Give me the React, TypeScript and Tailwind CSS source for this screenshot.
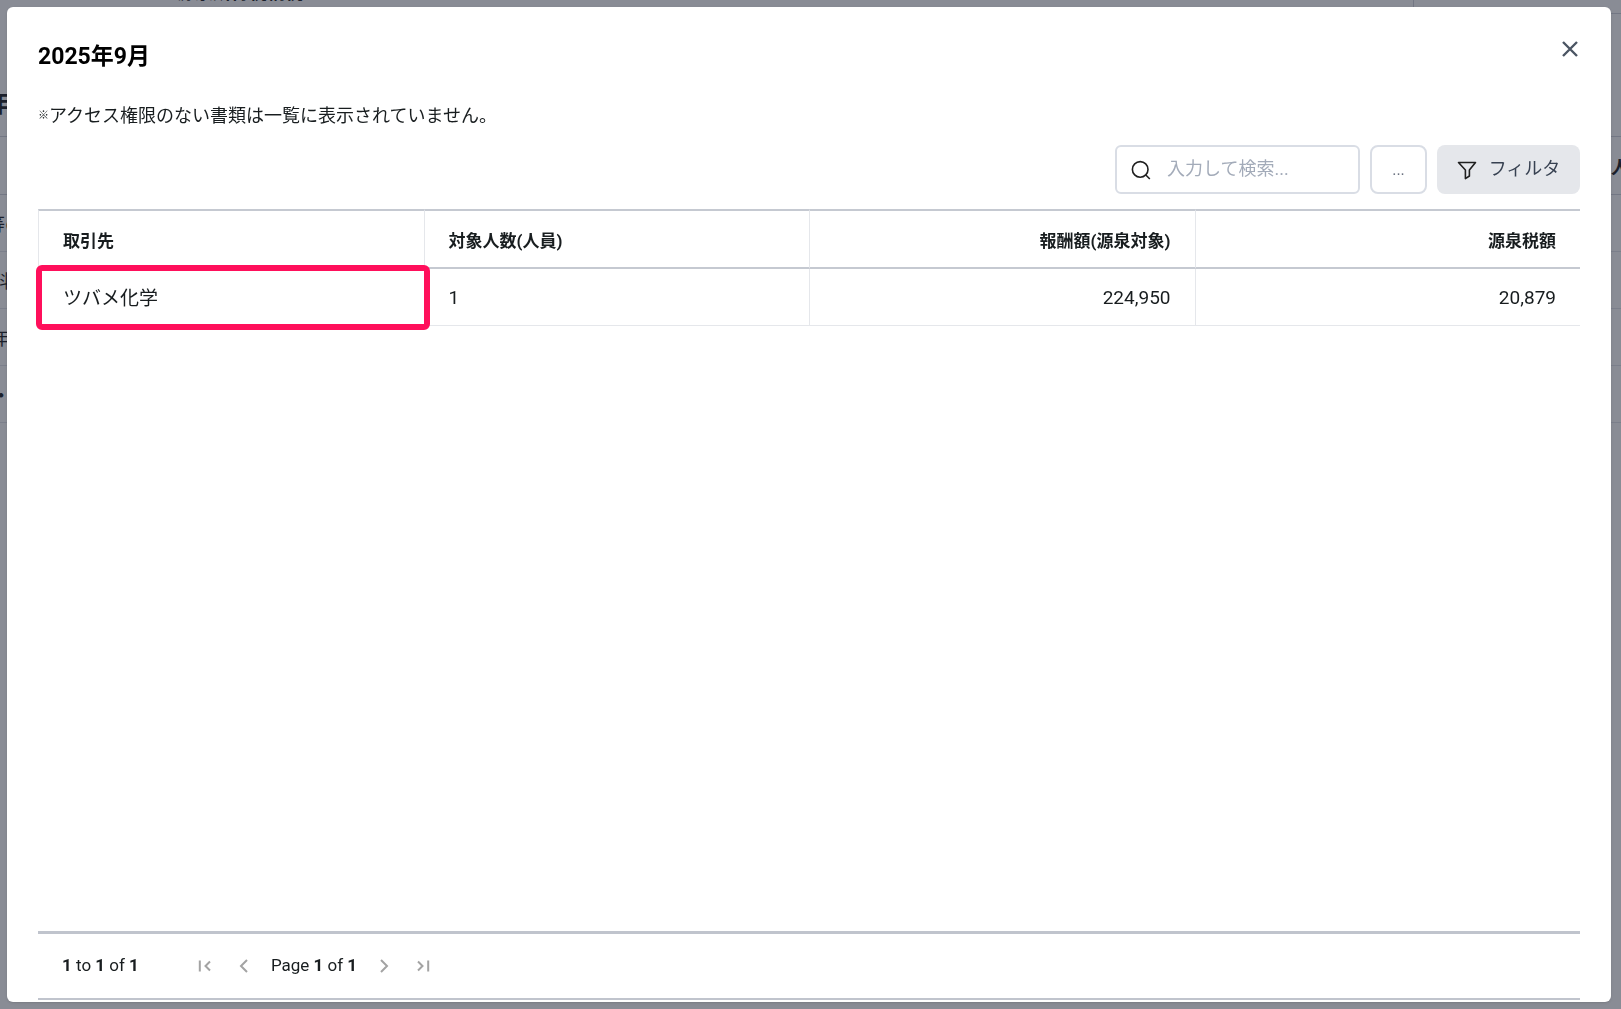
import { useState } from "react";

type Row = {
  partner: string;
  people: number;
  amount: number;
  tax: number;
};

const rows: Row[] = [{ partner: "ツバメ化学", people: 1, amount: 224950, tax: 20879 }];

const cell = "border-l border-[#e5e7eb] px-6";
const head = "border-l border-y-2 border-l-[#e5e7eb] border-y-[#c5c9d1] px-6 pt-[5px]";
const pager = "flex h-6 w-6 items-center justify-center text-[#a3a3a3]";
const behindRow = "flex h-[57px] shrink-0 items-center border-b border-[#7b7f8b] pt-1 text-lg whitespace-nowrap";

function Chevron({ flip, bar }: { flip?: boolean; bar?: boolean }) {
  return (
    <svg
      className={flip ? "h-4 w-4 rotate-180" : "h-4 w-4"}
      viewBox="0 0 16 16"
      fill="none"
      stroke="currentColor"
      strokeWidth="2"
    >
      {bar ? (
        <>
          <path d="M2.8 2.5v11" />
          <path d="M13 3.5 8.5 8l4.5 4.5" />
        </>
      ) : (
        <path d="M11 2 5 8l6 6" />
      )}
    </svg>
  );
}

// dimmed list page, only its edges show around the dialog
function PageBehind() {
  return (
    <div className="flex h-screen flex-col overflow-hidden bg-[#898c95] text-[#1b1f2b]">
      <div className="flex h-[14px] shrink-0 justify-between overflow-hidden">
        <span className="-mt-[19px] ml-[177px] h-6 text-lg leading-6 font-bold">源泉所得税納税</span>
        <div className="h-full w-[208px] border-b border-l border-[#737784]" />
      </div>
      <div className="flex h-[123px] shrink-0 items-end border-b border-[#737784] pb-4">
        <span className="flex w-[11px] justify-end text-2xl font-bold">年</span>
      </div>
      <div className="flex h-[58px] shrink-0 items-center justify-end border-b border-[#737784] pt-1">
        <span className="w-[10px] overflow-hidden text-lg font-bold">人</span>
      </div>
      <div className={behindRow}>
        <span className="flex w-[23px] justify-end">等の</span>
      </div>
      <div className={behindRow}>
        <span className="flex w-[10px] justify-end">料</span>
      </div>
      <div className={behindRow}>
        <span className="flex w-[10px] justify-end">年</span>
      </div>
      <div className={behindRow}>
        <span className="flex w-[10px] justify-end font-bold">・</span>
      </div>
    </div>
  );
}

export default function App() {
  const [query, setQuery] = useState("");
  const visible = rows.filter((r) => r.partner.includes(query));

  return (
    <div className="font-[Roboto,'Noto_Sans_CJK_JP',sans-serif]">
      <PageBehind />
      <div className="fixed inset-0 flex pt-[7px] pr-[10px] pb-[7px] pl-[7px]">
        <div
          role="dialog"
          aria-labelledby="dialog-title"
          className="flex min-w-0 flex-1 flex-col rounded-md bg-white px-[31px] pb-[2px] text-[#181d1f] shadow-sm"
        >
          <header className="flex items-start justify-between pt-8">
            <h2 id="dialog-title" className="mt-0.5 mb-0.5 text-[23px] leading-8 font-bold text-black">
              2025年9月
            </h2>
            <button type="button" aria-label="閉じる" className="p-0.5 text-[#4b5563]">
              <svg className="h-4 w-4" viewBox="0 0 16 16" stroke="currentColor" strokeWidth="2.4">
                <path d="M1 1l14 14M15 1L1 15" />
              </svg>
            </button>
          </header>

          <p className="mt-7 flex items-center text-lg leading-[26px]">
            <span className="text-[11px]">※</span>
            アクセス権限のない書類は一覧に表示されていません。
          </p>

          <div className="mt-4 flex justify-end gap-[10px]">
            <label className="flex h-[49px] w-[245px] items-center rounded-md border-2 border-[#d9dde5] pl-[14px]">
              <svg className="h-5 w-5 shrink-0" viewBox="0 0 20 20" fill="none" stroke="#1f1f1f" strokeWidth="1.6">
                <circle cx="9.2" cy="9.4" r="7.8" />
                <path d="M14.8 15l4 4" />
              </svg>
              <input
                type="text"
                aria-label="検索"
                placeholder="入力して検索..."
                value={query}
                onChange={(e) => setQuery(e.target.value)}
                className="ml-4 w-full min-w-0 pb-0.5 text-lg outline-none placeholder:text-[#a3abb9]"
              />
            </label>
            <button type="button" className="h-[49px] w-[57px] rounded-lg border-2 border-[#d9dde5] text-base text-[#6b7280]">
              ...
            </button>
            <button
              type="button"
              className="flex h-[49px] w-[143px] items-center justify-center gap-3 rounded-lg bg-[#e5e7eb] text-lg text-[#374151]"
            >
              <svg className="h-5 w-5" viewBox="0 0 20 20" fill="none" stroke="#1f1f1f" strokeWidth="1.6" strokeLinejoin="round">
                <path d="M1.5 2.5h17L12.4 10v6l-4 2.6V10z" />
              </svg>
              <span className="pb-0.5">フィルタ</span>
            </button>
          </div>

          <table className="mt-[15px] w-full table-fixed border-separate border-spacing-0 text-left">
            <thead>
              <tr className="h-[60px] text-[17px] font-bold">
                <th className={head}>取引先</th>
                <th className={head}>対象人数(人員)</th>
                <th className={`${head} text-right`}>報酬額(源泉対象)</th>
                <th className={`${head} text-right`}>源泉税額</th>
              </tr>
            </thead>
            <tbody>
              {visible.map((r) => (
                <tr key={r.partner} className="h-[57px] text-[19px]">
                  <td className={`${cell} relative border-b pt-1`}>
                    {r.partner}
                    <span className="pointer-events-none absolute -top-[4px] -right-[6px] -bottom-[5px] -left-[3px] rounded-md border-6 border-[#ff0f5b]" />
                  </td>
                  <td className={`${cell} border-b pt-0.5`}>{r.people}</td>
                  <td className={`${cell} border-b pt-0.5 text-right`}>{r.amount.toLocaleString("en-US")}</td>
                  <td className={`${cell} border-b pt-0.5 text-right`}>{r.tax.toLocaleString("en-US")}</td>
                </tr>
              ))}
            </tbody>
          </table>

          <footer className="mt-auto flex h-[69px] items-center border-t-3 border-b-2 border-[#c0c4cd] px-6 text-[17px]">
            <span>
              <b>1</b> to <b>1</b> of <b>1</b>
            </span>
            <div className="ml-[54px] flex items-center gap-[15px]">
              <button type="button" aria-label="最初のページ" className={pager}>
                <Chevron bar />
              </button>
              <button type="button" aria-label="前のページ" className={pager}>
                <Chevron />
              </button>
              <span>
                Page <b>1</b> of <b>1</b>
              </span>
              <button type="button" aria-label="次のページ" className={pager}>
                <Chevron flip />
              </button>
              <button type="button" aria-label="最後のページ" className={pager}>
                <Chevron bar flip />
              </button>
            </div>
          </footer>
        </div>
      </div>
    </div>
  );
}
